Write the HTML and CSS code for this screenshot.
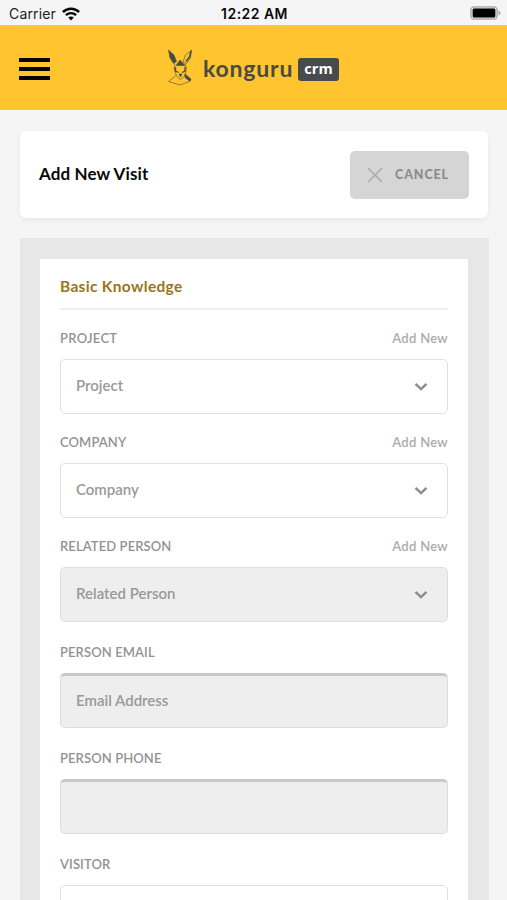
FILE: index.html
```html
<!DOCTYPE html>
<html lang="en">
<head>
<meta charset="utf-8">
<title>Add New Visit</title>
<link rel="stylesheet" href="styles.css">
</head>
<body>
<div class="status">
  <div class="carrier"><span>Carrier</span>
    <svg width="18" height="14" viewBox="0 0 18 14" fill="none" stroke="#080808"><path d="M.9 5C5.500.7 12.500.7 17.100 5" stroke-width="2.500"/><path d="M3.900 8.200c2.900-2.700 7.300-2.700 10.200 0" stroke-width="2.300"/><path d="M6.200 10.500c1.600-1.500 4-1.500 5.600 0L9 13.500z" fill="#080808" stroke="none"/></svg>
  </div>
  <span class="time">12:22 AM</span>
  <svg class="battery" width="31" height="14" viewBox="0 0 31 14"><rect x=".8" y=".8" width="26.400" height="12.400" rx="3.500" fill="#d8d8d8" stroke="#aaa" stroke-width="1.300"/><rect x="2.700" y="2.500" width="22.600" height="9" rx="1.500"/><path d="M28.500 4.500q2 .5 2 2.500t-2 2.500z" fill="#aaa"/></svg>
</div>
<header class="topbar">
  <div class="menu"><i></i><i></i><i></i></div>
  <div class="brand">
    <svg class="mark" width="26" height="38" viewBox="0 0 26 38" fill="none" stroke="#474b43" stroke-width=".6">
      <path d="M1.500 2 7 7l2.500 6.500-3 2L3 10z" fill="#474b43"/>
      <path d="M24.500 2 18.500 7 16 14l3.500 1.500L23.500 10z"/>
      <path d="M24 3 22.500 9 19 13.500" stroke-width="1.600"/>
      <path d="M13 12 9 17.500h9z" fill="#474b43"/>
      <path d="M8 15.500 7 21l2.500 7 4 3.500 4-3.500 2-7-1.500-5.500"/>
      <path d="M8.500 19v4l3 1.500m6.500-5.500v4l-3 1.500" stroke-width="1.300"/>
      <path d="M12 26h3l-1.500 3z" fill="#474b43"/>
      <path d="m18 26 6 5-1 2.500-5-4z" fill="#474b43"/>
      <path d="M8.500 28 1.500 33.500 13 37l9-3.500"/>
    </svg>
    <span class="name">konguru</span><span class="tag">crm</span>
  </div>
</header>
<main>
  <section class="card">
    <h1>Add New Visit</h1>
    <button class="cancel"><svg width="16" height="16" viewBox="0 0 16 16"><path d="m1 1 14 14M15 1 1 15" stroke="#aaa" stroke-width="1.500"/></svg><span>CANCEL</span></button>
  </section>
  <section class="panel">
    <form class="sheet">
      <h2>Basic Knowledge</h2>
      <div class="field">
        <div class="label"><span class="spaced">PROJECT</span><a>Add New</a></div>
        <div class="box"><span>Project</span><svg width="14" height="10" viewBox="0 0 14 10"><path d="m1.500 1.800 5.500 5.200 5.500-5.200"/></svg></div>
      </div>
      <div class="field">
        <div class="label"><span>COMPANY</span><a>Add New</a></div>
        <div class="box"><span>Company</span><svg width="14" height="10" viewBox="0 0 14 10"><path d="m1.500 1.800 5.500 5.200 5.500-5.200"/></svg></div>
      </div>
      <div class="field roomy">
        <div class="label"><span>RELATED PERSON</span><a>Add New</a></div>
        <div class="box disabled"><span>Related Person</span><svg width="14" height="10" viewBox="0 0 14 10"><path d="m1.500 1.800 5.500 5.200 5.500-5.200"/></svg></div>
      </div>
      <div class="field roomy">
        <div class="label"><span>PERSON EMAIL</span></div>
        <div class="box disabled inset"><span>Email Address</span></div>
      </div>
      <div class="field roomy">
        <div class="label"><span>PERSON PHONE</span></div>
        <div class="box disabled inset"></div>
      </div>
      <div class="field">
        <div class="label"><span>VISITOR</span></div>
        <div class="box"></div>
      </div>
    </form>
  </section>
</main>
</body>
</html>
```

FILE: styles.css
```css
* { box-sizing: border-box; }
html, body { height: 900px; overflow: hidden; }
body { margin: 0; background: #f5f5f5; font-family: Lato, "Liberation Sans", sans-serif; color: #080808; }
.status { height: 25px; display: grid; grid-template-columns: 1fr auto 1fr; align-items: center; padding: 2px 6px 0 9px; font-family: Inter, "Liberation Sans", sans-serif; font-size: 14px; }
.carrier { display: flex; align-items: center; gap: 6px; color: #222; letter-spacing: .15px; }
.time { font-weight: 600; font-size: 14px; letter-spacing: .45px; margin-right: 1px; }
.battery { justify-self: end; margin-top: -2px; }
.topbar { height: 85px; background: #ffc42e; display: flex; align-items: center; padding: 3px 19px 0; }
.menu { width: 31px; display: grid; gap: 5px; }
.menu i { height: 4px; background: #080400; }
.brand { display: flex; align-items: center; margin-left: 117px; color: #474b43; }
.mark { margin-top: -5px; }
.name { font-size: 23px; font-weight: 700; line-height: 28px; margin: -3px 5px 0 10px; width: 90px; letter-spacing: .8px; }
.tag { width: 41px; height: 23px; border-radius: 3px; background: #474b4d; color: #fff; font: 700 14.500px/21px "Open Sans", sans-serif; text-align: center; }
main { padding: 21px 18px 0 20px; }
.card { height: 87px; width: 468px; background: #fff; border-radius: 6px; padding: 0 19px; display: flex; align-items: center; justify-content: space-between; box-shadow: 0 2px 5px #0000000f; }
h1 { margin: -2px 0 0; font-size: 17px; font-weight: 700; letter-spacing: .12px; }
.cancel { display: flex; align-items: center; gap: 12px; width: 119px; height: 48px; padding: 0 0 0 17px; border: 0; border-radius: 5px; background: #d5d5d5; color: #8b8b8b; font: 900 12.500px Lato, sans-serif; letter-spacing: .9px; }
.panel { margin-top: 20px; background: #e7e7e7; padding: 21px 21px 0 20px; }
.sheet { background: #fff; padding: 0 20px; height: 660px; }
h2 { margin: 0 0 18px; height: 51px; padding-top: 1px; border-bottom: 2px solid #eee; line-height: 53px; font-size: 15.500px; font-weight: 700; letter-spacing: .32px; color: #967719; }
.field { margin-bottom: 18px; }
.roomy { margin-bottom: 20px; }
.label { height: 20px; line-height: 21px; margin-bottom: 11px; display: flex; justify-content: space-between; font-size: 13px; font-weight: 600; color: #929292; white-space: nowrap; letter-spacing: .1px; }
.label .spaced { letter-spacing: .3px; }
.label a { color: #aaa; letter-spacing: .3px; }
.box { height: 55px; border: 1px solid #e0e0e0; border-radius: 5px; padding: 0 19px 0 15px; display: flex; align-items: center; justify-content: space-between; color: #999; font-size: 15px; font-weight: 600; background: #fff; }
.box span { margin-top: -3px; }
.box svg { fill: none; stroke: #8c8c8c; stroke-width: 2.400; }
.disabled { background: #eee; border-color: #dedede; }
.inset { border-top: 3px solid #c9c9c9; }
.inset span { margin-top: -4px; }
```
